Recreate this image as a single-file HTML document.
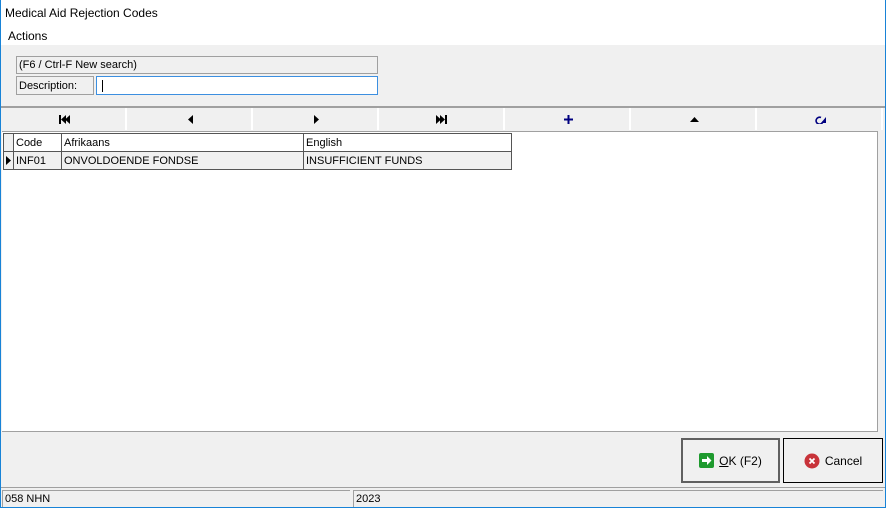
<!DOCTYPE html>
<html><head><style>
*{margin:0;padding:0;box-sizing:border-box}
body{width:886px;height:508px;position:relative;background:#f0f0f0;font-family:"Liberation Sans",sans-serif;font-size:11px;color:#000;overflow:hidden}
.a{position:absolute}
.btn{position:absolute;top:108px;height:22px;width:124px;background:#f0f0f0;border-right:2px solid #fff;display:flex;align-items:center;justify-content:center}
.c{position:absolute;height:18px;border-right:1px solid #555;border-bottom:1px solid #555;padding:3px 0 0 2px;white-space:nowrap}
</style></head><body>
<div class="a" style="left:0;top:0;width:886px;height:508px;border:1px solid #1883d7;border-top:none"></div>
<div class="a" style="left:1px;top:0;width:884px;height:45px;background:#fff"></div>
<div class="a" style="left:5px;top:6px;font-size:12px">Medical Aid Rejection Codes</div>
<div class="a" style="left:8px;top:29px;font-size:12px">Actions</div>
<div class="a" style="left:16px;top:56px;width:362px;height:18px;border:1px solid #a0a0a0;padding:2px 0 0 2px">(F6 / Ctrl-F New search)</div>
<div class="a" style="left:16px;top:76px;width:78px;height:19px;border:1px solid #a0a0a0;padding:3px 0 0 2px">Description:</div>
<div class="a" style="left:96px;top:76px;width:282px;height:19px;border:1px solid #3c8fe0;background:#fff"><div class="a" style="left:5px;top:3px;width:1px;height:12px;background:#000"></div></div>
<div class="a" style="left:1px;top:106px;width:884px;height:2px;background:#a0a0a0"></div>
<div class="btn" style="left:3px"><svg width="12" height="9"><path d="M1 0h2v9H1zM8 0L3 4.5 8 9zM12 0L7 4.5 12 9z"/></svg></div>
<div class="btn" style="left:129px"><svg width="5" height="9"><path d="M5 0L0 4.5 5 9z"/></svg></div>
<div class="btn" style="left:255px"><svg width="5" height="9"><path d="M0 0L5 4.5 0 9z"/></svg></div>
<div class="btn" style="left:381px"><svg width="12" height="9"><path d="M0 0L5 4.5 0 9zM4 0l5 4.5L4 9zM9 0h2v9H9z"/></svg></div>
<div class="btn" style="left:507px"><svg width="9" height="9"><path d="M3.5 0h2v9h-2zM0 3.5h9v2H0z" fill="#000080"/></svg></div>
<div class="btn" style="left:633px"><svg width="9" height="5"><path d="M0 5L4.5 0 9 5z"/></svg></div>
<div class="btn" style="left:759px"><svg width="11" height="9"><path d="M6 2.5A3.5 3.5 0 1 0 8 6.5" fill="none" stroke="#000080" stroke-width="1.6"/><path d="M11 2v6H6z" fill="#000080"/></svg></div>
<div class="a" style="left:2px;top:131px;width:876px;height:301px;background:#fff;border-top:1px solid #a0a0a0;border-bottom:1px solid #a0a0a0;border-right:1px solid #a0a0a0"></div>
<div class="a" style="left:3px;top:133px;width:509px;height:37px;border-left:1px solid #555;border-top:1px solid #555"></div>
<div class="c" style="left:4px;top:134px;width:10px;background:#f0f0f0"></div>
<div class="c" style="left:14px;top:134px;width:48px">Code</div>
<div class="c" style="left:62px;top:134px;width:242px">Afrikaans</div>
<div class="c" style="left:304px;top:134px;width:208px">English</div>
<div class="c" style="left:4px;top:152px;width:10px;background:#f0f0f0"><svg width="5" height="9" style="position:absolute;left:2px;top:4px"><path d="M0 0L5 4.5 0 9z"/></svg></div>
<div class="c" style="left:14px;top:152px;width:48px;background:#f0f0f0">INF01</div>
<div class="c" style="left:62px;top:152px;width:242px;background:#f0f0f0">ONVOLDOENDE FONDSE</div>
<div class="c" style="left:304px;top:152px;width:208px;background:#f0f0f0">INSUFFICIENT FUNDS</div>
<div class="a" style="left:681px;top:438px;width:99px;height:45px;border:2px solid #606060;display:flex;align-items:center;justify-content:center;font-size:12px"><svg width="15" height="15" style="margin-right:5px"><rect width="15" height="15" rx="2" fill="#1e9a2e"/><path d="M3 6h5V3l4.5 4.5L8 12V9H3z" fill="#fff"/></svg><u>O</u>K (F2)</div>
<div class="a" style="left:783px;top:438px;width:100px;height:45px;border:1px solid #000;display:flex;align-items:center;justify-content:center;font-size:12px"><svg width="16" height="16" style="margin-right:5px"><circle cx="8" cy="8" r="7.5" fill="#c8333a"/><path d="M5.5 5.5l5 5M10.5 5.5l-5 5" stroke="#fff" stroke-width="1.8"/></svg>Cancel</div>
<div class="a" style="left:1px;top:487px;width:884px;height:1px;background:#a0a0a0"></div>
<div class="a" style="left:2px;top:490px;width:348px;height:17px;border-left:1px solid #a0a0a0;border-top:1px solid #a0a0a0;padding:2px 0 0 2px">058 NHN</div>
<div class="a" style="left:353px;top:490px;width:530px;height:17px;border-left:1px solid #a0a0a0;border-top:1px solid #a0a0a0;padding:2px 0 0 2px">2023</div>
</body></html>
